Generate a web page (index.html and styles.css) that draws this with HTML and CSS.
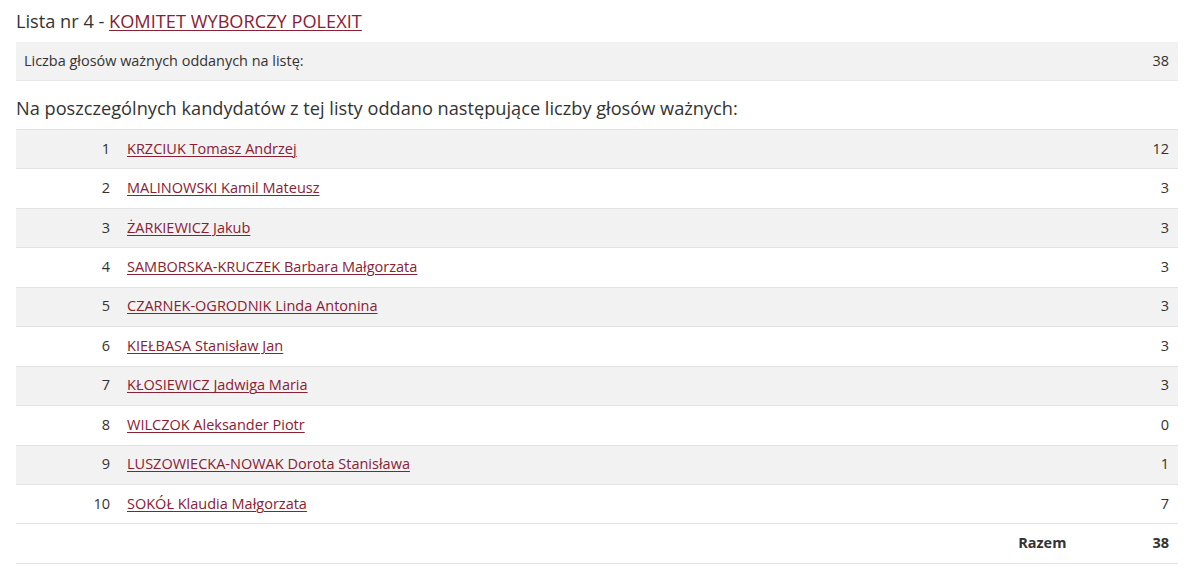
FILE: index.html
```html
<!DOCTYPE html>
<html lang="pl">
<head>
<meta charset="utf-8">
<link rel="stylesheet" href="styles.css">
</head>
<body>
<div class="page">
  <h2 class="title">Lista nr 4 - <a href="#">KOMITET WYBORCZY POLEXIT</a></h2>
  <div class="summary">
    <span>Liczba głosów ważnych oddanych na listę:</span>
    <span>38</span>
  </div>
  <h3 class="subtitle">Na poszczególnych kandydatów z tej listy oddano następujące liczby głosów ważnych:</h3>
  <div class="table">
    <div class="row odd"><span class="num">1</span><a class="name" href="#">KRZCIUK Tomasz Andrzej</a><span class="votes">12</span></div>
    <div class="row"><span class="num">2</span><a class="name" href="#">MALINOWSKI Kamil Mateusz</a><span class="votes">3</span></div>
    <div class="row odd"><span class="num">3</span><a class="name" href="#">ŻARKIEWICZ Jakub</a><span class="votes">3</span></div>
    <div class="row"><span class="num">4</span><a class="name" href="#">SAMBORSKA-KRUCZEK Barbara Małgorzata</a><span class="votes">3</span></div>
    <div class="row odd"><span class="num">5</span><a class="name" href="#">CZARNEK-OGRODNIK Linda Antonina</a><span class="votes">3</span></div>
    <div class="row"><span class="num">6</span><a class="name" href="#">KIEŁBASA Stanisław Jan</a><span class="votes">3</span></div>
    <div class="row odd"><span class="num">7</span><a class="name" href="#">KŁOSIEWICZ Jadwiga Maria</a><span class="votes">3</span></div>
    <div class="row"><span class="num">8</span><a class="name" href="#">WILCZOK Aleksander Piotr</a><span class="votes">0</span></div>
    <div class="row odd"><span class="num">9</span><a class="name" href="#">LUSZOWIECKA-NOWAK Dorota Stanisława</a><span class="votes">1</span></div>
    <div class="row"><span class="num">10</span><a class="name" href="#">SOKÓŁ Klaudia Małgorzata</a><span class="votes">7</span></div>
    <div class="row total"><span class="num"></span><span class="name label">Razem</span><span class="votes">38</span></div>
  </div>
</div>
</body>
</html>
```
FILE: styles.css
```css
html, body {
  margin: 0;
  padding: 0;
  background: #fff;
}
body {
  font-family: "Open Sans", "Liberation Sans", sans-serif;
  color: #333;
}
.page {
  padding: 8px 22px 0 16px;
}
.title {
  margin: 0;
  font-size: 18.2px;
  font-weight: 400;
  line-height: 27px;
  height: 34px;
  color: #333;
}
.title a, .name {
  color: #8b2033;
  text-decoration: underline;
  text-underline-offset: 2px;
  text-decoration-thickness: 1px;
}
.summary {
  display: flex;
  justify-content: space-between;
  align-items: center;
  height: 39px;
  box-sizing: border-box;
  padding: 0 9px 1px 8px;
  background: #f2f2f2;
  border-bottom: 1px solid #e8e8e8;
  font-size: 14.45px;
}
.subtitle {
  margin: 0;
  font-size: 18.2px;
  font-weight: 400;
  line-height: 26px;
  padding: 14px 0 8px 0;
  color: #333;
}
.table {
  font-size: 14.5px;
  border-bottom: 1px solid #e3e3e3;
}
.row {
  display: flex;
  align-items: center;
  height: 39.45px;
  box-sizing: border-box;
  padding-bottom: 2px;
  border-top: 1px solid #e3e3e3;
  background: #fff;
}
.row.odd {
  background: #f2f2f2;
}
.num {
  width: 94px;
  padding-right: 8px;
  text-align: right;
  flex: none;
}
.row .name {
  flex: none;
  margin-left: 9px;
}
.row .votes {
  margin-left: auto;
  padding-right: 9px;
  text-align: right;
}
.total {
  font-weight: 700;
}
.total .label {
  color: #333;
  text-decoration: none;
  margin-left: auto;
  margin-right: 86px;
}
.total .votes {
  margin-left: 0;
}
```
